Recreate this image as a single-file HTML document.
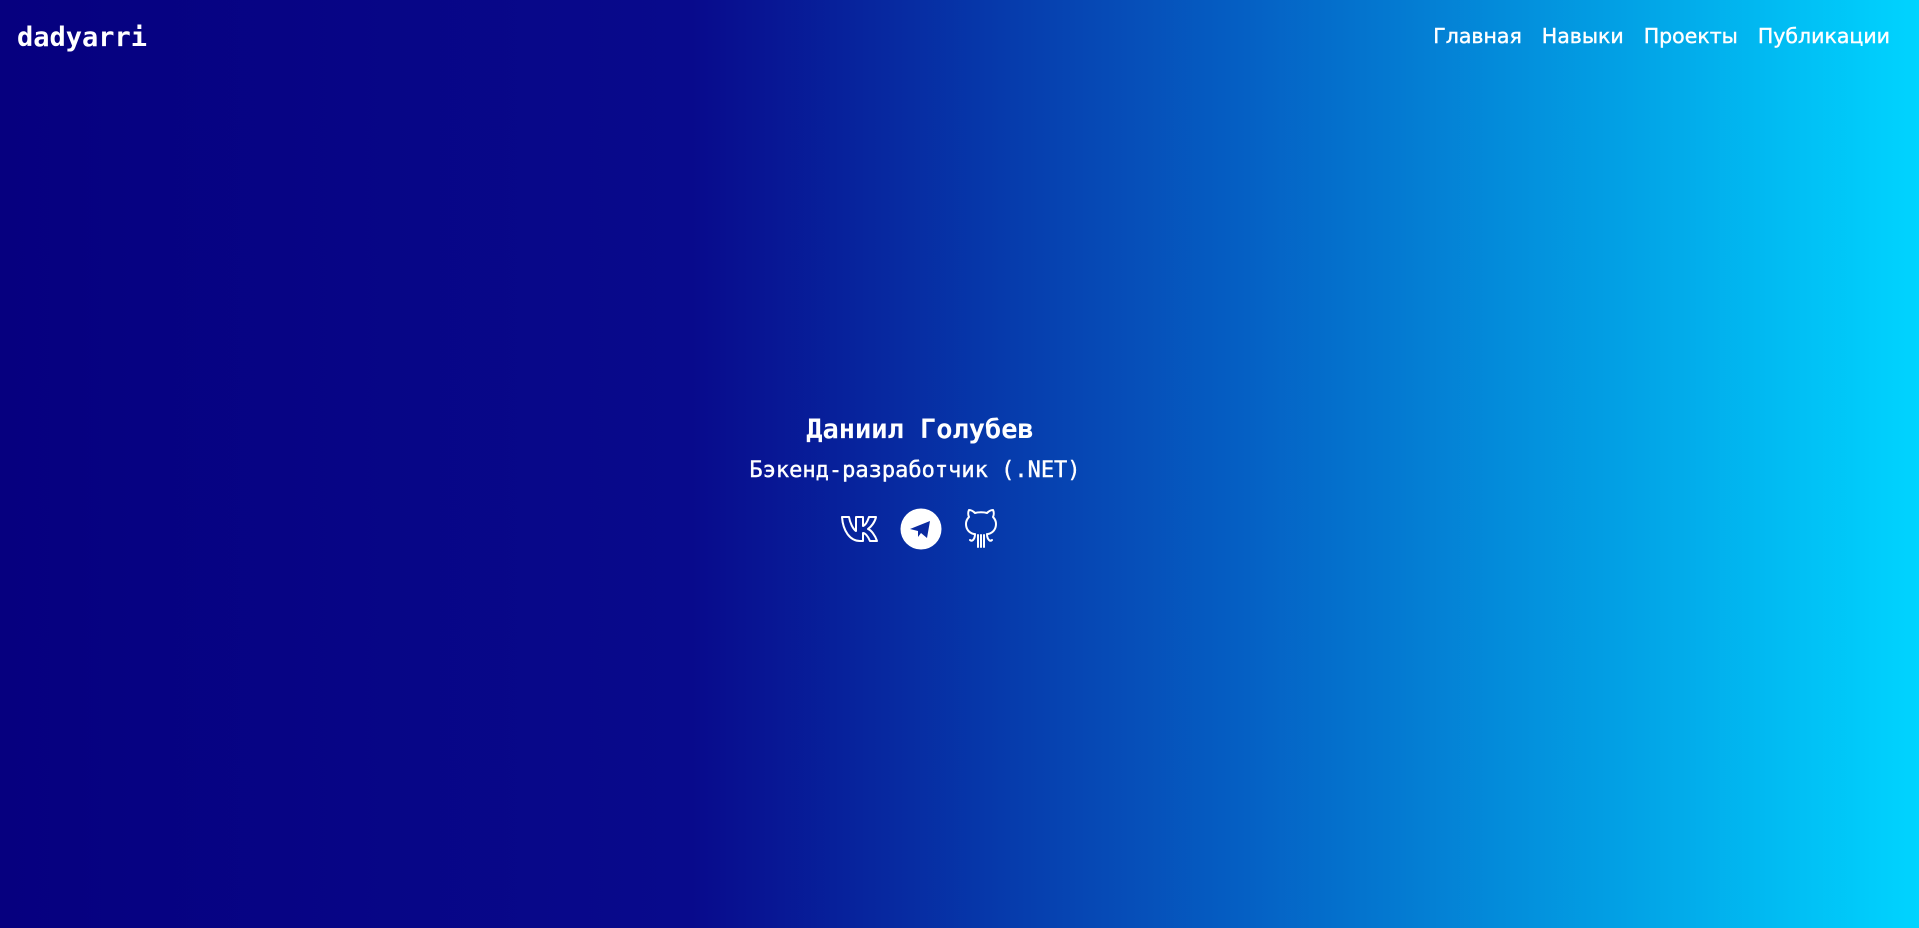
<!DOCTYPE html>
<html><head><meta charset="utf-8"><style>
html,body{margin:0;padding:0;width:1919px;height:928px;overflow:hidden}
body{background:linear-gradient(90deg,#06007f 0%,#080a8c 36%,#0560c4 65%,#00d4ff 100%);color:#fff;position:relative}
.logo{position:absolute;left:17px;top:22px;font:bold 27px "DejaVu Sans Mono","Liberation Mono",monospace}
.nav{position:absolute;right:29px;top:24px;font:20.5px "DejaVu Sans","Liberation Sans",sans-serif;display:flex;gap:20px;-webkit-text-stroke:0.4px #fff}
.name{position:absolute;left:0;width:1840px;text-align:center;top:414px;font:bold 27px "DejaVu Sans Mono","Liberation Mono",monospace}
.sub{position:absolute;left:0;width:1830px;text-align:center;top:458px;font:22px "DejaVu Sans Mono","Liberation Mono",monospace;-webkit-text-stroke:0.4px #fff}
svg{position:absolute}
</style></head><body>
<div class="logo">dadyarri</div>
<div class="nav"><span>Главная</span><span>Навыки</span><span>Проекты</span><span>Публикации</span></div>
<div class="name">Даниил Голубев</div>
<div class="sub">Бэкенд-разработчик (.NET)</div>
<svg style="left:840px;top:513px" width="42" height="32" viewBox="0 0 42 32"><path d="M2 4h7c1 6 4 12 7 14V4h7v9c3-1 5-6 6-9h7c-1 5-5 10-8 12 3 1 7 6 9 12h-7c-2-5-5-8-7-8v8h-3C10 28 3 18 2 4z" fill="none" stroke="#fff" stroke-width="2" stroke-linejoin="round"/></svg>
<svg style="left:900px;top:508px" width="42" height="42" viewBox="0 0 42 42"><circle cx="21" cy="21" r="20.5" fill="#fff"/><path d="M10 21l20-8-3 17-6-5-3 4v-6l-8-2z" fill="#0a2aa0"/></svg>
<svg style="left:964px;top:507px" width="34" height="42" viewBox="0 0 34 42"><path d="M10 27C5 26 2 22 2 17c0-3 1-5 3-7C4 8 4 5 5 3c2 0 4 1 6 3 3-1 9-1 12 0 2-2 4-3 6-3 1 2 1 5 0 7 2 2 3 4 3 7 0 5-3 9-8 10M11 27c0 3-1 5-2 6s-2 1-3 0M14 28v12M17 28v12M20 28v12M23 27c0 3 1 5 2 6s2 1 3 0" fill="none" stroke="#fff" stroke-width="2" stroke-linecap="round" stroke-linejoin="round"/></svg>
</body></html>
